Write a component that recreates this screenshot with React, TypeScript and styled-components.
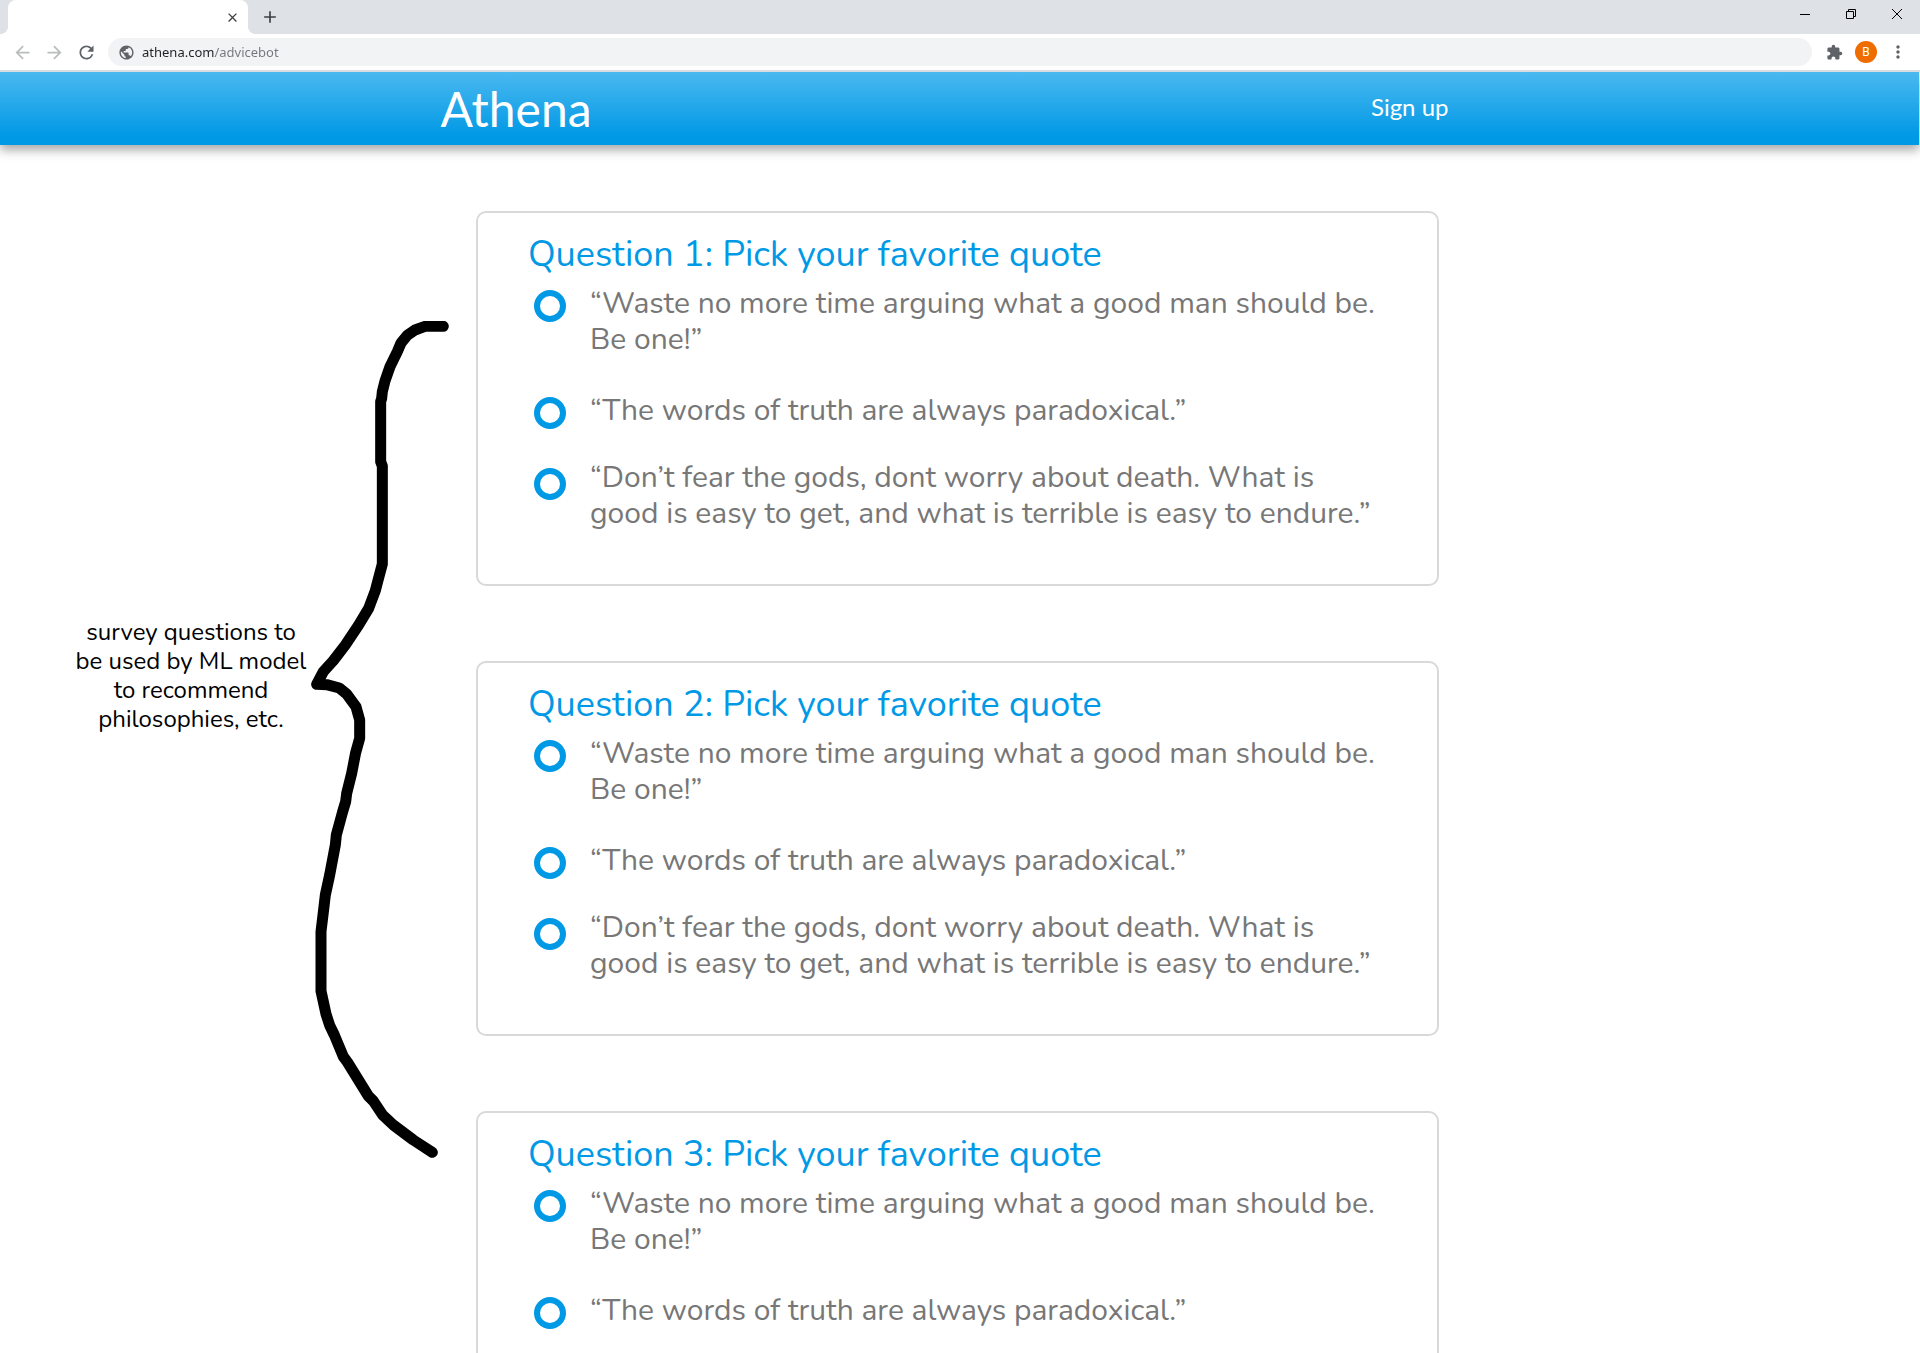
import React from "react";
import styled, { createGlobalStyle } from "styled-components";
import {
  MdAdd,
  MdArrowBack,
  MdArrowForward,
  MdClose,
  MdExtension,
  MdMoreVert,
  MdPublic,
  MdRefresh,
} from "react-icons/md";

const brand = "#0099e5";
const bodyFont = `Nunito, "Open Sans", sans-serif`;
const headerFont = `Lato, "Open Sans", sans-serif`;
const chromeFont = `"Noto Sans", "Open Sans", sans-serif`;

const GlobalStyle = createGlobalStyle`
  *, *::before, *::after { box-sizing: border-box; }
  html { scrollbar-width: none; }
  body { margin: 0; background: #fff; font-family: ${bodyFont}; }
  button { border: 0; padding: 0; background: none; font: inherit; cursor: pointer; }
`;

/* Browser chrome */

const Chrome = styled.div`
  position: sticky;
  top: 0;
  z-index: 1;
`;

const TabStrip = styled.div`
  display: flex;
  align-items: stretch;
  height: 34px;
  padding-left: 8px;
  background: #dee1e6;
`;

const Tab = styled.div`
  position: relative;
  display: flex;
  align-items: center;
  justify-content: flex-end;
  width: 240px;
  padding-right: 8px;
  background: #fff;
  border-radius: 8px 8px 0 0;

  &::before,
  &::after {
    content: "";
    position: absolute;
    bottom: 0;
    width: 8px;
    height: 8px;
  }
  &::before {
    right: 100%;
    background: radial-gradient(circle at 0 0, transparent 8px, #fff 8px);
  }
  &::after {
    left: 100%;
    background: radial-gradient(circle at 100% 0, transparent 8px, #fff 8px);
  }
`;

const StripButton = styled.button<{ $width: number }>`
  display: flex;
  align-items: center;
  justify-content: center;
  width: ${(p) => p.$width}px;
  color: #3c4043;
`;

const NewTabSlot = styled.div`
  display: flex;
  flex: 1;
  padding-left: 6px;
`;

const WindowControls = styled.div`
  display: flex;
  height: 28px;
`;

const Toolbar = styled.div`
  display: flex;
  align-items: center;
  height: 38px;
  padding: 0 6px;
  background: #fff;
  border-bottom: 2px solid #d9dce0;
`;

const ToolButton = styled.button<{ $muted?: boolean }>`
  display: flex;
  align-items: center;
  justify-content: center;
  width: 32px;
  height: 32px;
  color: ${(p) => (p.$muted ? "#babcbe" : "#5f6368")};
`;

const AddressBar = styled.label`
  display: flex;
  flex: 1;
  align-items: center;
  gap: 7px;
  height: 28px;
  margin: 0 6px;
  padding: 0 10px;
  background: #f1f3f4;
  border-radius: 14px;
  color: #5f6368;
`;

const AddressInput = styled.input`
  flex: 1;
  min-width: 0;
  padding: 0;
  border: 0;
  outline: 0;
  font: 13px/20px ${chromeFont};
  color: transparent;
  caret-color: #202124;
  background: linear-gradient(90deg, #202124 73px, #74777b 73px);
  background-clip: text;
  -webkit-background-clip: text;
`;

const Avatar = styled.span`
  display: flex;
  align-items: center;
  justify-content: center;
  width: 22px;
  height: 22px;
  border-radius: 50%;
  background: #ef6c00;
  color: #fff;
  font: 12px/22px Roboto, sans-serif;
`;

/* Page */

const Header = styled.header`
  height: 73px;
  margin-right: 1px;
  padding-right: 30px;
  background: linear-gradient(#4bb8f0, ${brand} 88%);
  box-shadow: 0 5px 10px rgba(0, 0, 0, 0.35);
  font-family: ${headerFont};
`;

const Nav = styled.nav`
  display: flex;
  align-items: center;
  justify-content: space-between;
  max-width: 1008px;
  height: 100%;
  margin: 0 auto;
`;

const Brand = styled.a`
  color: #fff;
  font-size: 48px;
  line-height: 58px;
  text-decoration: none;
`;

const NavLink = styled.a`
  padding-bottom: 4px;
  color: #fff;
  font-size: 24px;
  line-height: 30px;
  text-decoration: none;
`;

const Main = styled.main`
  display: grid;
  grid-template-columns: minmax(min-content, 1fr) minmax(0, 963px) 1fr;
  align-items: start;
  padding: 66px 5px 75px 0;
`;

const Annotation = styled.aside`
  display: flex;
  align-items: center;
  justify-content: flex-end;
  gap: 4px;
  padding: 110px 26px 0 0;
`;

const Note = styled.p`
  width: 232px;
  margin: 0;
  padding-bottom: 128px;
  color: #000;
  font-size: 24px;
  line-height: 29px;
  text-align: center;
  white-space: pre-line;
`;

const Brace = styled.svg`
  flex: none;
  width: 139px;
  height: 837px;
`;

const Questions = styled.div`
  display: flex;
  flex-direction: column;
  gap: 75px;
`;

const Card = styled.section`
  padding: 18px 50px 48px;
  border: 2px solid #d9d9d9;
  border-radius: 10px;
`;

const Title = styled.h2`
  margin: 0 0 7px;
  color: ${brand};
  font-size: 36px;
  font-weight: 400;
  line-height: 48px;
`;

const Options = styled.div`
  display: flex;
  flex-direction: column;
  gap: 31px;
  padding-left: 6px;
`;

const Option = styled.label<{ $lines: number }>`
  display: flex;
  align-items: flex-start;
  gap: 24px;
  padding-bottom: ${(p) => (p.$lines > 1 ? 4 : 0)}px;
  cursor: pointer;
`;

const Radio = styled.input<{ $low?: boolean }>`
  flex: none;
  appearance: none;
  width: 32px;
  height: 32px;
  margin: ${(p) => (p.$low ? 8 : 4)}px 0 0;
  border: 6px solid ${brand};
  border-radius: 50%;
  background: #fff;

  &:checked {
    background: radial-gradient(circle, ${brand} 5px, #fff 6px);
  }
`;

const Quote = styled.span`
  color: #777;
  font-size: 30px;
  line-height: 36px;
  white-space: pre-line;
`;

const quotes = [
  { text: "“Waste no more time arguing what a good man should be.\nBe one!”", lines: 2 },
  { text: "“The words of truth are always paradoxical.”", lines: 1 },
  {
    text: "“Don’t fear the gods, dont worry about death. What is\ngood is easy to get, and what is terrible is easy to endure.”",
    lines: 2,
    low: true,
  },
];

const bracePoints =
  "460,49 405,49 375,60 352,76 333,99 322,125 300,170 285,213 277,245 275,265 272,275 272,455 277,468 277,762 " +
  "263,815 256,842 236,895 206,945 166,1005 130,1052 100,1085 80,1123 110,1124 148,1134 170,1152 198,1190 209,1230 " +
  "209,1285 197,1328 185,1390 170,1450 167,1475 158,1505 139,1575 136,1605 119,1695 106,1755 102,1790 93,1865 " +
  "93,2043 108,2112 119,2146 133,2175 160,2240 172,2256 235,2358 250,2373 278,2415 310,2445 370,2490 427,2527";

function QuestionCard({ number }: { number: number }) {
  const titleId = `question-${number}`;
  return (
    <Card>
      <Title id={titleId}>Question {number}: Pick your favorite quote</Title>
      <Options role="radiogroup" aria-labelledby={titleId}>
        {quotes.map((q) => (
          <Option key={q.text} $lines={q.lines}>
            <Radio type="radio" name={titleId} value={q.text} $low={q.low} />
            <Quote>{q.text}</Quote>
          </Option>
        ))}
      </Options>
    </Card>
  );
}

function BrowserChrome() {
  return (
    <Chrome>
      <TabStrip>
        <Tab>
          <StripButton $width={16} aria-label="Close tab">
            <MdClose size={15} />
          </StripButton>
        </Tab>
        <NewTabSlot>
          <StripButton $width={32} aria-label="New tab">
            <MdAdd size={20} />
          </StripButton>
        </NewTabSlot>
        <WindowControls>
          <StripButton $width={46} aria-label="Minimize">
            <svg width="10" height="10" stroke="#000" fill="none">
              <path d="M0 5.5h10" />
            </svg>
          </StripButton>
          <StripButton $width={46} aria-label="Restore">
            <svg width="10" height="10" stroke="#000" fill="none">
              <path d="M.5 2.5h7v7h-7zM2.5 2.5v-2h7v7h-2" />
            </svg>
          </StripButton>
          <StripButton $width={46} aria-label="Close window">
            <svg width="10" height="10" stroke="#000" fill="none">
              <path d="M0 0l10 10M10 0L0 10" />
            </svg>
          </StripButton>
        </WindowControls>
      </TabStrip>
      <Toolbar>
        <ToolButton $muted aria-label="Back">
          <MdArrowBack size={21} />
        </ToolButton>
        <ToolButton $muted aria-label="Forward">
          <MdArrowForward size={21} />
        </ToolButton>
        <ToolButton aria-label="Reload">
          <MdRefresh size={21} />
        </ToolButton>
        <AddressBar>
          <MdPublic size={17} />
          <AddressInput type="text" aria-label="Address" defaultValue="athena.com/advicebot" />
        </AddressBar>
        <ToolButton aria-label="Extensions">
          <MdExtension size={17} />
        </ToolButton>
        <ToolButton aria-label="Profile">
          <Avatar>B</Avatar>
        </ToolButton>
        <ToolButton aria-label="Menu">
          <MdMoreVert size={20} />
        </ToolButton>
      </Toolbar>
    </Chrome>
  );
}

export default function App() {
  return (
    <>
      <GlobalStyle />
      <BrowserChrome />
      <Header>
        <Nav>
          <Brand href="#home">Athena</Brand>
          <NavLink href="#signup">Sign up</NavLink>
        </Nav>
      </Header>
      <Main>
        <Annotation>
          <Note>{"survey questions to\nbe used by ML model\nto recommend\nphilosophies, etc."}</Note>
          <Brace viewBox="63 33 417 2511" aria-hidden="true">
            <polyline
              points={bracePoints}
              fill="none"
              stroke="#000"
              strokeWidth="33"
              strokeLinecap="round"
              strokeLinejoin="round"
            />
          </Brace>
        </Annotation>
        <Questions>
          {[1, 2, 3].map((n) => (
            <QuestionCard key={n} number={n} />
          ))}
        </Questions>
      </Main>
    </>
  );
}
